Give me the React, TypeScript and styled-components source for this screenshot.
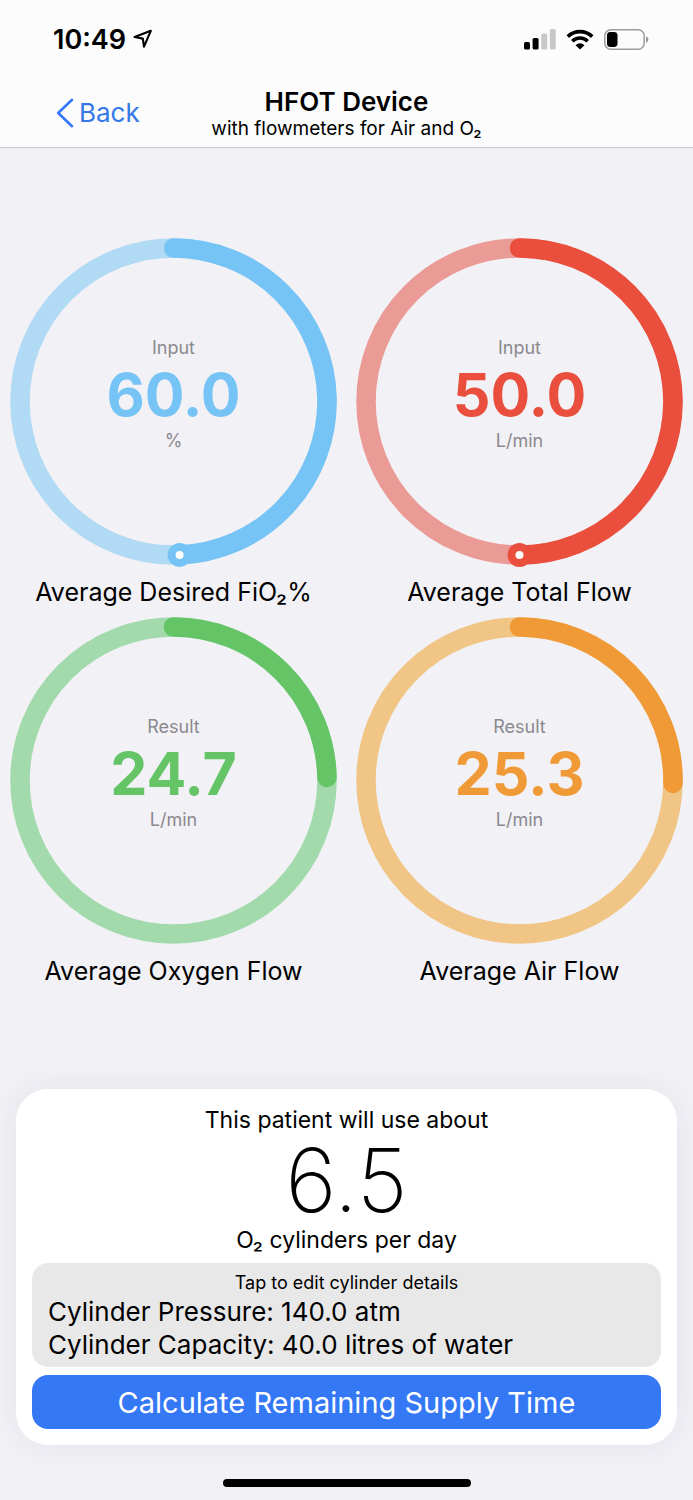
import { useId, useState } from "react";
import styled, { createGlobalStyle } from "styled-components";

const GlobalStyle = createGlobalStyle`
  *, *::before, *::after { box-sizing: border-box; }
  body {
    margin: 0;
    background: #f2f1f6;
    color: #000;
    font-family: Inter, "Liberation Sans", sans-serif;
    -webkit-font-smoothing: antialiased;
  }
  h1, p { margin: 0; }
`;

const Screen = styled.div`
  display: flex;
  flex-direction: column;
  min-height: 100vh;
`;

const TopBar = styled.header`
  background: #fcfcfd;
  border-bottom: 1px solid #c9c8cd;
`;

const StatusBar = styled.div`
  display: flex;
  align-items: center;
  justify-content: space-between;
  height: 78px;
  padding: 0 44px 0 53px;
`;

const Clock = styled.div`
  display: flex;
  align-items: center;
  gap: 7px;
  font-size: 27px;
  font-weight: 600;
`;

const StatusIcons = styled.div`
  display: flex;
  align-items: center;
  gap: 10px;
`;

const NavBar = styled.nav`
  display: grid;
  grid-template-columns: 1fr auto 1fr;
  align-items: center;
  height: 69px;
  padding: 0 56px;
`;

const BackLink = styled.a`
  display: flex;
  align-items: center;
  gap: 5px;
  color: #3478e5;
  font-size: 26px;
  text-decoration: none;
`;

const TitleBlock = styled.div`
  padding-top: 2px;
  text-align: center;
`;

const Title = styled.h1`
  font-size: 26px;
  line-height: 30px;
  font-weight: 600;
`;

const Subtitle = styled.p`
  font-size: 19px;
  line-height: 24px;
`;

const Gauges = styled.main`
  flex: 1;
  display: grid;
  grid-template-columns: 1fr 1fr;
  align-content: center;
  column-gap: 19px;
  padding: 0 10px 4px;
`;

const GaugeCell = styled.section`
  display: flex;
  flex-direction: column;
`;

const Dial = styled.div`
  position: relative;
  display: grid;
  place-items: center;
  aspect-ratio: 1;
`;

const Ring = styled.svg`
  grid-area: 1 / 1;
  width: 100%;
  height: 100%;
  overflow: visible;
`;

const Reading = styled.div<{ $color: string }>`
  grid-area: 1 / 1;
  display: flex;
  flex-direction: column;
  align-items: center;
  padding-bottom: 14px;
  color: #8a898e;
  font-size: 18px;
  line-height: 24px;

  strong {
    color: ${(p) => p.$color};
    font-size: 59px;
    line-height: 69px;
    font-weight: 700;
  }
`;

const DialSlider = styled.input`
  position: absolute;
  inset: 0;
  width: 100%;
  height: 100%;
  margin: 0;
  opacity: 0;
  cursor: pointer;
`;

const Caption = styled.label`
  padding-top: 2px;
  font-size: 25px;
  line-height: 50px;
  text-align: center;
  white-space: nowrap;
`;

const Card = styled.section`
  display: flex;
  flex-direction: column;
  gap: 8px;
  margin: 0 16px;
  padding: 16px;
  background: #fff;
  border-radius: 32px;
  box-shadow: 0 0 32px rgba(40, 40, 70, 0.07);
`;

const Usage = styled.div`
  display: flex;
  flex-direction: column;
  align-items: center;
  font-size: 23px;
  line-height: 30px;

  strong {
    font-size: 88px;
    line-height: 90px;
    font-weight: 200;
  }
`;

const DetailsButton = styled.button`
  display: flex;
  flex-direction: column;
  padding: 8px 16px 6px;
  border: 0;
  border-radius: 16px;
  background: #e8e8e8;
  color: #000;
  font: inherit;
  text-align: left;
  cursor: pointer;
`;

const DetailsHint = styled.span`
  align-self: center;
  font-size: 18px;
  line-height: 24px;
`;

const DetailsLine = styled.span`
  font-size: 26px;
  line-height: 33px;
`;

const PrimaryButton = styled.button`
  height: 54px;
  border: 0;
  border-radius: 16px;
  background: #3478f6;
  color: #fff;
  font: inherit;
  font-size: 29px;
  cursor: pointer;
`;

const HomeArea = styled.footer`
  display: flex;
  justify-content: center;
  padding: 34px 0 13px;
`;

const HomeIndicator = styled.div`
  width: 248px;
  height: 8px;
  border-radius: 4px;
  background: #000;
`;

const LocationIcon = () => (
  <svg width="20" height="20" viewBox="0 0 20 20" fill="none" aria-hidden="true">
    <path d="M17.8 1.8 1.6 8 9.8 9.6 11 17.6Z" stroke="#000" strokeWidth="2.1" strokeLinejoin="round" />
  </svg>
);

const SignalIcon = () => (
  <svg width="32" height="21" viewBox="0 0 32 21" aria-hidden="true">
    <rect x="0" y="13" width="6" height="7.5" rx="1.6" />
    <rect x="8.6" y="9" width="6" height="11.5" rx="1.6" />
    <rect x="17.2" y="4.6" width="6" height="15.9" rx="1.6" fill="#c8c8c9" />
    <rect x="25.8" y="0" width="6" height="20.5" rx="1.6" fill="#c8c8c9" />
  </svg>
);

const WifiIcon = () => (
  <svg width="28" height="21" viewBox="0 0 28 21" fill="none" stroke="#000" aria-hidden="true">
    <path d="M1.8 7.6a17.4 17.4 0 0 1 24.4 0" strokeWidth="3.6" />
    <path d="M6.3 12.2a11 11 0 0 1 15.4 0" strokeWidth="3.6" />
    <path d="M14 20.6 9.5 16.2a6.4 6.4 0 0 1 9 0Z" fill="#000" stroke="none" />
  </svg>
);

const BatteryIcon = () => (
  <svg width="45" height="21" viewBox="0 0 45 21" aria-hidden="true">
    <rect x="0.8" y="0.8" width="39.4" height="19.4" rx="6" fill="none" stroke="#9b9b9c" strokeWidth="1.5" />
    <rect x="3" y="3" width="10.5" height="15" rx="3.4" />
    <path d="M42 7.2c1.5.5 2.4 1.8 2.4 3.3s-.9 2.8-2.4 3.3Z" fill="#9b9b9c" />
  </svg>
);

const ChevronIcon = () => (
  <svg width="18" height="30" viewBox="0 0 18 30" fill="none" aria-hidden="true">
    <path d="M16 1.8 2.2 15 16 28.2" stroke="#3478f6" strokeWidth="2.6" strokeLinecap="round" strokeLinejoin="round" />
  </svg>
);

type GaugeProps = {
  kind: "Input" | "Result";
  caption: string;
  unit: string;
  color: string;
  track: string;
  value: number;
  min?: number;
  max?: number;
  onChange?: (value: number) => void;
};

const RADIUS = 307;
const CENTER = 327;

function Gauge({ kind, caption, unit, color, track, value, min = 0, max = 100, onChange }: GaugeProps) {
  const id = useId();
  const angle = ((value - min) / (max - min)) * 2 * Math.PI;
  const x = CENTER + RADIUS * Math.sin(angle);
  const y = CENTER - RADIUS * Math.cos(angle);
  const largeArc = angle > Math.PI ? 1 : 0;

  return (
    <GaugeCell>
      <Dial>
        <Ring viewBox="0 0 654 654" fill="none" aria-hidden="true">
          <circle cx={CENTER} cy={CENTER} r={RADIUS} stroke={track} strokeWidth="39" />
          <path
            d={`M${CENTER} ${CENTER - RADIUS}A${RADIUS} ${RADIUS} 0 ${largeArc} 1 ${x} ${y}`}
            stroke={color}
            strokeWidth="39"
            strokeLinecap="round"
          />
          {onChange && (
            <>
              <circle cx={x} cy={y} r="24" fill={color} />
              <circle cx={x} cy={y} r="8" fill="#fff" />
            </>
          )}
        </Ring>
        <Reading $color={color}>
          <span>{kind}</span>
          <strong>{value.toFixed(1)}</strong>
          <span>{unit}</span>
        </Reading>
        {onChange && (
          <DialSlider
            id={id}
            type="range"
            min={min}
            max={max}
            step={1}
            value={value}
            onChange={(e) => onChange(Number(e.target.value))}
          />
        )}
      </Dial>
      <Caption as={onChange ? "label" : "p"} htmlFor={onChange ? id : undefined}>
        {caption}
      </Caption>
    </GaugeCell>
  );
}

export default function App() {
  const [fio2, setFio2] = useState(60);
  const [flow, setFlow] = useState(50);
  const oxygen = (flow * (fio2 - 21)) / 79;

  return (
    <Screen>
      <GlobalStyle />
      <TopBar>
        <StatusBar>
          <Clock>
            10:49
            <LocationIcon />
          </Clock>
          <StatusIcons>
            <SignalIcon />
            <WifiIcon />
            <BatteryIcon />
          </StatusIcons>
        </StatusBar>
        <NavBar>
          <BackLink href="#back">
            <ChevronIcon />
            Back
          </BackLink>
          <TitleBlock>
            <Title>HFOT Device</Title>
            <Subtitle>with flowmeters for Air and O₂</Subtitle>
          </TitleBlock>
        </NavBar>
      </TopBar>

      <Gauges>
        <Gauge kind="Input" caption="Average Desired FiO₂%" unit="%" color="#76c4f5" track="#b1daf4" value={fio2} min={21} onChange={setFio2} />
        <Gauge kind="Input" caption="Average Total Flow" unit="L/min" color="#ea4e3d" track="#eb9b95" value={flow} onChange={setFlow} />
        <Gauge kind="Result" caption="Average Oxygen Flow" unit="L/min" color="#65c466" track="#a2daac" value={oxygen} />
        <Gauge kind="Result" caption="Average Air Flow" unit="L/min" color="#f09a37" track="#f0c586" value={flow - oxygen} />
      </Gauges>

      <Card>
        <Usage>
          <span>This patient will use about</span>
          <strong>6.5</strong>
          <span>O₂ cylinders per day</span>
        </Usage>
        <DetailsButton type="button">
          <DetailsHint>Tap to edit cylinder details</DetailsHint>
          <DetailsLine>Cylinder Pressure: 140.0 atm</DetailsLine>
          <DetailsLine>Cylinder Capacity: 40.0 litres of water</DetailsLine>
        </DetailsButton>
        <PrimaryButton type="button">Calculate Remaining Supply Time</PrimaryButton>
      </Card>

      <HomeArea>
        <HomeIndicator />
      </HomeArea>
    </Screen>
  );
}
